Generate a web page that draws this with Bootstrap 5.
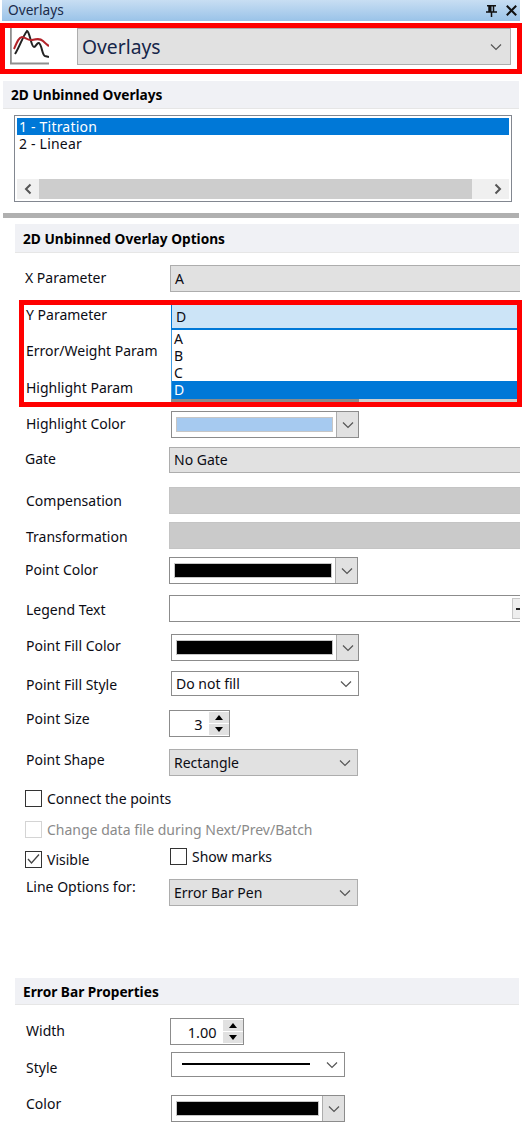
<!DOCTYPE html>
<html lang="en">
<head>
<meta charset="utf-8">
<title>Overlays</title>
<link rel="stylesheet" href="https://cdn.jsdelivr.net/npm/bootstrap@5.3.0/dist/css/bootstrap.min.css">
<style>
html,body{margin:0;background:#fff;overflow:hidden}
body{font-family:"Noto Sans","Open Sans",sans-serif;font-size:14px;line-height:18px;color:#0c0c14}
.pane{width:522px;height:1125px;overflow:hidden}
.sprites{width:0;height:0;position:absolute}
.tm1{margin-top:1px}.tm2{margin-top:2px}.tm4{margin-top:4px}.tm6{margin-top:6px}.tm7{margin-top:7px}.tm8{margin-top:8px}.tm9{margin-top:9px}.tm10{margin-top:10px}.tm11{margin-top:11px}.tm12{margin-top:12px}.tm13{margin-top:13px}.tm14{margin-top:14px}.tm18{margin-top:18px}.tm19{margin-top:19px}.tm72{margin-top:72px}
.titlebar{margin-left:2px;width:518px;height:21px;padding-left:6px;background:linear-gradient(#c8def3,#9ac3e8);font-size:13.7px;color:#1b2b4a}
.titlebar span{margin-top:-2px}
.titlebar svg{display:block}
.pin{margin-left:auto;margin-right:9px}
.closex{margin-right:3px}
.redtop{height:51px;border:5px solid #f00;background:#fff}
.chart{margin-left:5px;margin-right:28px;flex:none}
.bigcombo{width:434px;height:37px;padding:0 8px 0 4px;background:#e1e1e1;border:1.5px solid #adadad;font-size:19.300px;color:#16264a}
.ico-chev{margin-left:auto;flex:none;display:block}
.secthead{height:28px;padding-left:8px;padding-top:1px;background:#f0f1f5;border-bottom:1px solid #e6e6e6;font-weight:700;font-size:13.700px;margin-left:3px;width:516px;color:#000}
.sect2{margin-left:15px;width:504px;height:29px}
.sect3{margin-left:15px;width:504px;height:27px}
.lstbox{margin-left:14px;width:498px;height:87px;border:1.5px solid #828790;padding:2px;background:#fff}
.lstrows{height:61px;border-radius:0}
.lstrows .list-group-item{border:0;padding:0 2px;height:17px;line-height:17px;font-size:14px;letter-spacing:.2px;background:#fff;color:#0c0c14}
.lstrows .list-group-item.active{background:#0078d7;color:#fff}
.hscroll{height:20px;background:#f0f0f0}
.hthumb{width:433px;height:20px;background:#cdcdcd}
.harrow{width:22px;flex:none}
.harrow.tail{margin-left:auto}
.rule{margin-left:3px;width:516px;height:5px;background:#b0b0b0}
.frow{width:520px}
.lab{margin-left:26px;width:143px;flex:none;white-space:nowrap}
.lab.lx{margin-left:25px;width:144px}
.up1{margin-top:-2px}.up2{margin-top:-4px}.up3{margin-top:-6px}.up4{margin-top:-8px}.up5{margin-top:-10px}.up6{margin-top:-12px}
.dn1{margin-top:2px}.dn3{margin-top:6px}
.cx1{margin-left:1px}.cx2{margin-left:2px}
.fld{height:27px;padding:0 6px 0 4px;border:1.5px solid #adadad;background:#e1e1e1;flex:none}
.fld.white{background:#fff;border-color:#8c8c8c}
.fld.short{height:25px}
.fld.mid{height:26px}
.fld.w189{width:189px}.fld.w188{width:188px}.fld.w174{width:174px}
.fld.open{flex:1 1 auto;border-right:0}
.fld.dis{background:#cacaca;border-color:#c4c4c4}
.colorfld{padding:0}
.swatch{flex:1 1 auto;height:15px;margin:0 3px 0 4px;border:1px solid #c6c6c6}
.sw-blue{background:#a6caf0}
.sw-black{background:#000}
.splitbtn{width:22px;height:100%;flex:none;background:#e1e1e1;border-left:1.5px solid #adadad}
.legbtn{margin-left:auto;width:8px;height:21px;background:#eee;border:1px solid #c8c8c8;border-right:0;padding-left:3px}
.legdash{display:block;width:4px;height:2px;background:#222}
.spin{height:27px;border:1.5px solid #8c8c8c;background:#fff;padding:0 .5px 0 0;flex:none}
.spin3{width:61px}.spin1{width:74px}
.spinval{flex:1 1 auto;text-align:right;padding-right:6px;font-size:14.500px}
.spinbtns{width:20px;height:23px;flex:none;gap:1px}
.spinbtn{flex:1 1 0;background:#e1e1e1}
.redbox{margin-left:19px;width:503px;height:107px;border:5px solid #f00;background:#fff}
.labcol{width:147px;padding-left:2px;flex:none;white-space:nowrap}
.ycol{flex:1 1 auto;min-width:0}
.yfield{height:25px;background:#cce4f7;border-left:1px solid #0078d7;border-bottom:2px solid #0078d7;padding-left:4px;font-size:14px}
.ylist{height:69px;border-left:1px solid #3f9be0;background:#fff}
.ylist .yitem{height:17px;line-height:17px;padding-left:2px;font-size:14px}
.ylist .yitem.active{height:18px;background:#0078d7;color:#fff}
.ystrip{height:3px;background:#d0d0d0}
.ystrip i{display:block;width:188px;height:3px;background:#8a8a8a}
.pick{margin-left:25px;height:17px;white-space:nowrap}
.pick .form-check-input,.pick2 .form-check-input{width:17px;height:17px;margin:0 5px 0 0;flex:none;border:1.5px solid #333;border-radius:0;background-color:#fff;box-shadow:none;opacity:1;float:none}
.form-check-input.ticked:checked{background-color:#fff;border-color:#333;background-image:url("data:image/svg+xml,%3Csvg xmlns='http://www.w3.org/2000/svg' viewBox='0 0 17 17'%3E%3Cpath d='M3 8l3.500 4L14 3.500' fill='none' stroke='%23444' stroke-width='1.300'/%3E%3C/svg%3E");background-size:17px 17px}
.pick.off{color:#8a8a8a}
.pick.off .form-check-input{border-color:#d4d4d4}
.duo{height:20px}
.duo .pick{width:145px;margin-top:3px}
.pick2{height:17px;white-space:nowrap}
.penline{flex:none;width:128px;height:2px;background:#000;margin:0 0 2px 6px}
</style>
</head>
<body>
<svg class="sprites" aria-hidden="true">
<symbol id="chev" viewBox="0 0 12 8"><path d="M1 1.500l5 5 5-5" fill="none" stroke="#555" stroke-width="1.200"/></symbol>
<symbol id="up" viewBox="0 0 8 5"><path d="M4 0L8 5H0z" fill="#000"/></symbol>
<symbol id="dn" viewBox="0 0 8 5"><path d="M0 0H8L4 5z" fill="#000"/></symbol>
</svg>
<div class="pane">
  <div class="titlebar d-flex align-items-center">
    <span>Overlays</span>
    <svg class="pin" width="11" height="12" viewBox="0 0 11 12"><path d="M1 .8h9M3 1v5.500M7.500 1v5.500M0 7h11M5.500 7v5" stroke="#111" stroke-width="1.500" fill="none"/><rect x="3" y="1" width="2.500" height="6" fill="#111"/></svg>
    <svg class="closex" width="11" height="11" viewBox="0 0 11 11"><path d="M.8.800l9.400 9.400M10.200.800L.8 10.200" stroke="#111" stroke-width="2"/></svg>
  </div>

  <div class="redtop tm2 d-flex align-items-stretch">
    <svg class="chart" width="39" height="37" viewBox="0 0 39 37">
      <path d="M.8 0V35.500H39" fill="none" stroke="#8f8f8f" stroke-width="2"/>
      <path d="M5 26C9 20 13 8 17 3C20 4 21 19 24 19C26 19 27 14 29 15C32 17 32 27 35 28L39 29" fill="none" stroke="#222" stroke-width="2"/>
      <path d="M4 21C7 14 9 9 12 9C15 9 18 13 22 12C26 11 30 10 33 13C35 15 37 17 39 18" fill="none" stroke="#b3232a" stroke-width="2"/>
    </svg>
    <div class="bigcombo d-flex align-items-center">
      <span>Overlays</span>
      <svg class="ico-chev" width="12" height="8"><use href="#chev"/></svg>
    </div>
  </div>

  <div class="secthead tm7 d-flex align-items-center">2D Unbinned Overlays</div>

  <div class="lstbox tm6">
    <div class="list-group lstrows">
      <div class="list-group-item active">1 - Titration</div>
      <div class="list-group-item">2 - Linear</div>
    </div>
    <div class="hscroll d-flex align-items-center">
      <div class="harrow d-flex justify-content-center"><svg width="8" height="12" viewBox="0 0 8 12"><path d="M6.500 1.500L2 6l4.500 4.500" fill="none" stroke="#555" stroke-width="2"/></svg></div>
      <div class="hthumb"></div>
      <div class="harrow tail d-flex justify-content-center"><svg width="8" height="12" viewBox="0 0 8 12"><path d="M1.500 1.500L6 6l-4.500 4.500" fill="none" stroke="#555" stroke-width="2"/></svg></div>
    </div>
  </div>

  <div class="rule tm11"></div>

  <div class="secthead sect2 tm6 d-flex align-items-center">2D Unbinned Overlay Options</div>

  <div class="frow tm12 d-flex align-items-center">
    <div class="lab lx up1">X Parameter</div>
    <div class="fld open cx1 d-flex align-items-center">A</div>
  </div>

  <div class="redbox tm8 d-flex">
    <div class="labcol">
      <div class="tm1">Y Parameter</div>
      <div class="tm18">Error/Weight Param</div>
      <div class="tm19">Highlight Param</div>
    </div>
    <div class="ycol">
      <div class="yfield d-flex align-items-center">D</div>
      <div class="ylist">
        <div class="yitem">A</div>
        <div class="yitem">B</div>
        <div class="yitem">C</div>
        <div class="yitem active">D</div>
      </div>
      <div class="ystrip"><i></i></div>
    </div>
  </div>

  <div class="frow tm4 d-flex align-items-center">
    <div class="lab up1">Highlight Color</div>
    <div class="fld white colorfld w188 cx2 d-flex align-items-center">
      <div class="swatch sw-blue"></div>
      <div class="splitbtn d-flex align-items-center justify-content-center"><svg width="12" height="8"><use href="#chev"/></svg></div>
    </div>
  </div>

  <div class="frow tm9 d-flex align-items-center">
    <div class="lab lx up1">Gate</div>
    <div class="fld open mid d-flex align-items-center">No Gate</div>
  </div>

  <div class="frow tm14 d-flex align-items-center">
    <div class="lab">Compensation</div>
    <div class="fld open dis"></div>
  </div>

  <div class="frow tm8 d-flex align-items-center">
    <div class="lab dn1">Transformation</div>
    <div class="fld open dis"></div>
  </div>

  <div class="frow tm8 d-flex align-items-center">
    <div class="lab lx up1">Point Color</div>
    <div class="fld white colorfld w189 d-flex align-items-center">
      <div class="swatch sw-black"></div>
      <div class="splitbtn d-flex align-items-center justify-content-center"><svg width="12" height="8"><use href="#chev"/></svg></div>
    </div>
  </div>

  <div class="frow tm11 d-flex align-items-center">
    <div class="lab dn1">Legend Text</div>
    <div class="fld white open d-flex align-items-center pe-0"><div class="legbtn d-flex align-items-center"><span class="legdash"></span></div></div>
  </div>

  <div class="frow tm12 d-flex align-items-center">
    <div class="lab up2">Point Fill Color</div>
    <div class="fld white colorfld w188 cx2 d-flex align-items-center">
      <div class="swatch sw-black"></div>
      <div class="splitbtn d-flex align-items-center justify-content-center"><svg width="12" height="8"><use href="#chev"/></svg></div>
    </div>
  </div>

  <div class="frow tm10 d-flex align-items-center">
    <div class="lab dn1">Point Fill Style</div>
    <div class="fld white short w188 cx2 d-flex align-items-center">Do not fill<svg class="ico-chev" width="12" height="8"><use href="#chev"/></svg></div>
  </div>

  <div class="frow tm14 d-flex align-items-center">
    <div class="lab up5">Point Size</div>
    <div class="spin spin3 d-flex align-items-center">
      <div class="spinval">3</div>
      <div class="spinbtns d-flex flex-column">
        <div class="spinbtn d-flex align-items-center justify-content-center"><svg width="8" height="5"><use href="#up"/></svg></div>
        <div class="spinbtn d-flex align-items-center justify-content-center"><svg width="8" height="5"><use href="#dn"/></svg></div>
      </div>
    </div>
  </div>

  <div class="frow tm12 d-flex align-items-center">
    <div class="lab up3">Point Shape</div>
    <div class="fld w189 d-flex align-items-center">Rectangle<svg class="ico-chev" width="12" height="8"><use href="#chev"/></svg></div>
  </div>

  <div class="pick tm14 d-flex align-items-center">
    <input class="form-check-input" type="checkbox" aria-label="Connect the points"><span>Connect the points</span>
  </div>

  <div class="pick off tm14 d-flex align-items-center">
    <input class="form-check-input" type="checkbox" disabled aria-label="Change data file"><span>Change data file during Next/Prev/Batch</span>
  </div>

  <div class="duo tm10 d-flex">
    <div class="pick d-flex align-items-center">
      <input class="form-check-input ticked" type="checkbox" checked aria-label="Visible"><span>Visible</span>
    </div>
    <div class="pick2 d-flex align-items-center">
      <input class="form-check-input" type="checkbox" aria-label="Show marks"><span>Show marks</span>
    </div>
  </div>

  <div class="frow tm11 d-flex align-items-center">
    <div class="lab up6">Line Options for:</div>
    <div class="fld w189 d-flex align-items-center">Error Bar Pen<svg class="ico-chev" width="12" height="8"><use href="#chev"/></svg></div>
  </div>

  <div class="secthead sect3 tm72 d-flex align-items-center">Error Bar Properties</div>

  <div class="frow tm13 d-flex align-items-center">
    <div class="lab up1">Width</div>
    <div class="spin spin1 cx1 d-flex align-items-center">
      <div class="spinval">1.00</div>
      <div class="spinbtns d-flex flex-column">
        <div class="spinbtn d-flex align-items-center justify-content-center"><svg width="8" height="5"><use href="#up"/></svg></div>
        <div class="spinbtn d-flex align-items-center justify-content-center"><svg width="8" height="5"><use href="#dn"/></svg></div>
      </div>
    </div>
  </div>

  <div class="frow tm7 d-flex align-items-center">
    <div class="lab dn3">Style</div>
    <div class="fld white short w174 cx2 d-flex align-items-center"><div class="penline"></div><svg class="ico-chev" width="12" height="8"><use href="#chev"/></svg></div>
  </div>

  <div class="frow tm18 d-flex align-items-center">
    <div class="lab up5">Color</div>
    <div class="fld white colorfld w174 cx2 d-flex align-items-center">
      <div class="swatch sw-black"></div>
      <div class="splitbtn d-flex align-items-center justify-content-center"><svg width="12" height="8"><use href="#chev"/></svg></div>
    </div>
  </div>
</div>
<script src="https://cdn.jsdelivr.net/npm/bootstrap@5.3.0/dist/js/bootstrap.bundle.min.js"></script>
</body>
</html>
